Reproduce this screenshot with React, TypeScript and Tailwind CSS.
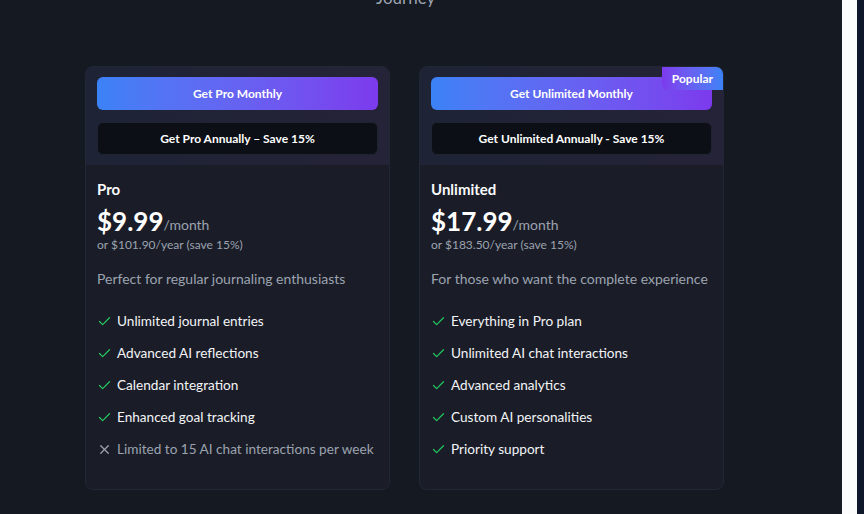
import { Check, X } from "lucide-react";

const PLANS = [
  {
    name: "Pro",
    monthly: "Get Pro Monthly",
    annual: "Get Pro Annually – Save 15%",
    price: "$9.99",
    yearly: "or $101.90/year (save 15%)",
    desc: "Perfect for regular journaling enthusiasts",
    features: [
      { text: "Unlimited journal entries", ok: true },
      { text: "Advanced AI reflections", ok: true },
      { text: "Calendar integration", ok: true },
      { text: "Enhanced goal tracking", ok: true },
      { text: "Limited to 15 AI chat interactions per week", ok: false },
    ],
    popular: false,
  },
  {
    name: "Unlimited",
    monthly: "Get Unlimited Monthly",
    annual: "Get Unlimited Annually - Save 15%",
    price: "$17.99",
    yearly: "or $183.50/year (save 15%)",
    desc: "For those who want the complete experience",
    features: [
      { text: "Everything in Pro plan", ok: true },
      { text: "Unlimited AI chat interactions", ok: true },
      { text: "Advanced analytics", ok: true },
      { text: "Custom AI personalities", ok: true },
      { text: "Priority support", ok: true },
    ],
    popular: true,
  },
];

export default function App() {
  return (
    <div
      className="flex h-[514px] w-[864px] overflow-hidden bg-[#151922]"
      style={{ fontFamily: "Lato, 'Noto Sans', sans-serif" }}
    >
      <main className="relative w-[842px] shrink-0">
        <p className="absolute left-[376px] top-[-13px] text-[17px] leading-[22px] text-[#9ca3af]">Journey</p>
        <div className="flex gap-[29px] pl-[85px] pt-[66px]">
          {PLANS.map((p) => (
            <PlanCard key={p.name} plan={p} />
          ))}
        </div>
      </main>
      <div className="w-[15px] shrink-0 bg-[#fbfbfc]" />
      <div className="flex-1 bg-[#0f172a]" />
    </div>
  );
}

function PlanCard({ plan }: { plan: (typeof PLANS)[number] }) {
  return (
    <div className="relative flex h-[424px] w-[305px] flex-col overflow-hidden rounded-lg border border-[#222736] bg-[#1a1d28]">
      {plan.popular && (
        <span className="absolute right-0 top-0 rounded-bl-md bg-gradient-to-r from-[#7c3aed] to-[#3b82f6] px-[10px] py-[3px] text-[12px] font-bold leading-[17px] text-white">
          Popular
        </span>
      )}
      <div className="flex flex-col gap-3 bg-gradient-to-r from-[#1e2336] to-[#252338] px-[11px] py-[10px]">
        <button className="h-[33px] w-full rounded-md bg-gradient-to-r from-[#3b82f6] to-[#7c3aed] text-[12px] font-bold text-white">
          {plan.monthly}
        </button>
        <button className="h-[33px] w-full rounded-md border border-[#1f2430] bg-[#0c1016] text-[12px] font-bold text-white">
          {plan.annual}
        </button>
      </div>
      <div className="flex flex-col px-[11px] pt-[12px]">
        <h3 className="text-[15px] font-bold leading-[24px] text-[#f9fafb]">{plan.name}</h3>
        <div className="mt-1 flex items-end">
          <span className="text-[26px] font-bold leading-[32px] text-white">{plan.price}</span>
          <span className="pb-[2px] text-[14px] leading-[20px] text-[#9ca3af]">/month</span>
        </div>
        <p className="text-[12px] leading-[16px] text-[#9ca3af]">{plan.yearly}</p>
        <p className="mt-4 text-[14px] leading-[20px] text-[#9ca3af]">{plan.desc}</p>
        <ul className="mt-[22px] flex flex-col gap-3">
          {plan.features.map((f) => (
            <li
              key={f.text}
              className={`flex items-center gap-[5px] whitespace-nowrap text-[13.6px] leading-[20px] ${f.ok ? "text-[#f3f4f6]" : "text-[#9ca3af]"}`}
            >
              {f.ok ? (
                <Check size={15} strokeWidth={2} className="shrink-0 text-[#22c55e]" />
              ) : (
                <X size={15} strokeWidth={2} className="shrink-0 text-[#9ca3af]" />
              )}
              <span>{f.text}</span>
            </li>
          ))}
        </ul>
      </div>
    </div>
  );
}
